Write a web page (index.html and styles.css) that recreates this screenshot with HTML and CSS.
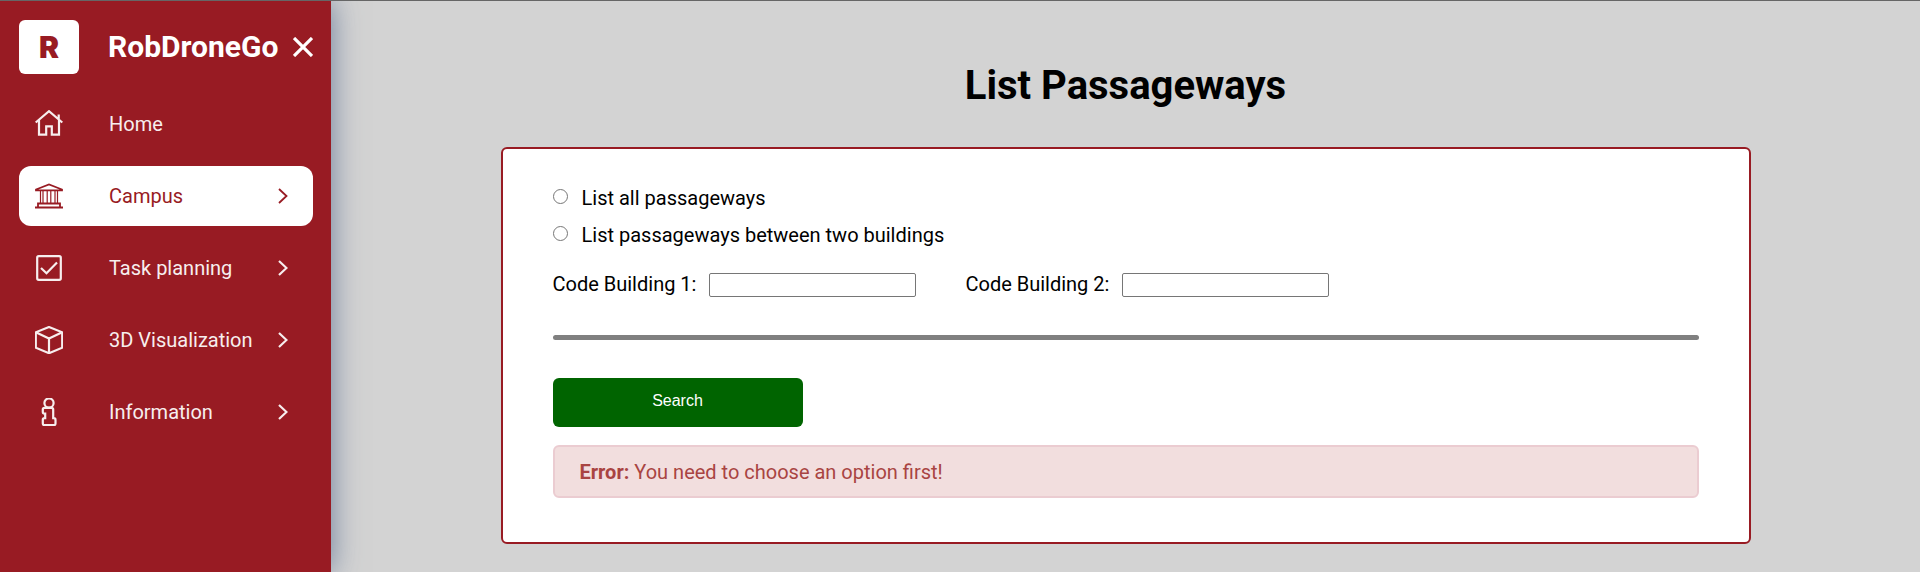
FILE: index.html
```
<!DOCTYPE html>
<html lang="en">
<head>
<meta charset="utf-8">
<title>RobDroneGo</title>
<link rel="stylesheet" href="styles.css">
</head>
<body>
<div class="layout">
  <aside class="sidebar">
    <header class="brand">
      <span class="brand-logo">R</span>
      <span class="brand-name">RobDroneGo</span>
      <button class="close" type="button" aria-label="Close menu">
        <svg width="20" height="20" viewBox="0 0 20 20"><path d="M1 1l18 18M19 1L1 19" stroke-width="3.200"/></svg>
      </button>
    </header>
    <nav class="menu">
      <a class="menu-item" href="#">
        <svg class="icon" viewBox="0 0 28 28"><path d="M.7 12.500L14 1.200l13.300 11.300M4 10.200v14.500h7.200v-8.300h5.600v8.300H24V10.200M23.700 9.200V4.400"/></svg>
        <span class="menu-label">Home</span>
      </a>
      <a class="menu-item active" href="#">
        <svg class="icon" viewBox="0 0 28 28"><path d="M1 7.500L14 2.500l13 5v.8H1zM3 25v-3.500h22V25M0 25.500h28" stroke-width="1.800"/><path d="M5.500 9v12M8 9v12M12.200 9v12M15.800 9v12M20 9v12M22.500 9v12" stroke-width="1.200"/></svg>
        <span class="menu-label">Campus</span>
        <svg class="chevron" viewBox="0 0 10 16"><path d="M1 1l7.500 7L1 15"/></svg>
      </a>
      <a class="menu-item" href="#">
        <svg class="icon" viewBox="0 0 28 28"><rect x="2.200" y="2.200" width="23.600" height="23.600" rx="1.500"/><path d="M6 14l5.500 5.200L22 8.500"/></svg>
        <span class="menu-label">Task planning</span>
        <svg class="chevron" viewBox="0 0 10 16"><path d="M1 1l7.500 7L1 15"/></svg>
      </a>
      <a class="menu-item" href="#">
        <svg class="icon" viewBox="0 0 28 28"><path d="M14 1l13.200 5.300v15.400L14 27.200.8 21.700V6.300zM.8 6.300L14 12.500l13.200-6.200M14 12.500v14.700"/></svg>
        <span class="menu-label">3D Visualization</span>
        <svg class="chevron" viewBox="0 0 10 16"><path d="M1 1l7.500 7L1 15"/></svg>
      </a>
      <a class="menu-item" href="#">
        <svg class="icon" viewBox="0 0 28 28"><circle cx="14" cy="5" r="4.600"/><path d="M9.500 9.800h7q1.700 0 1.700 1.700v8.700h.6q1.700 0 1.700 1.700v3.600q0 1.700-1.700 1.700H9.500q-1.700 0-1.700-1.700v-3.600q0-1.700 1.700-1.700h.7v-4.500h-.7q-1.700 0-1.700-1.700v-2.500q0-1.700 1.700-1.700z"/></svg>
        <span class="menu-label">Information</span>
        <svg class="chevron" viewBox="0 0 10 16"><path d="M1 1l7.500 7L1 15"/></svg>
      </a>
    </nav>
  </aside>

  <main class="content">
    <h1 class="title">List Passageways</h1>
    <form class="card">
      <div class="option">
        <input class="radio" type="radio" name="mode" id="all">
        <label for="all">List all passageways</label>
      </div>
      <div class="option">
        <input class="radio" type="radio" name="mode" id="between">
        <label for="between">List passageways between two buildings</label>
      </div>
      <div class="fields">
        <div class="field">
          <label for="code1">Code Building 1:</label>
          <input class="text" type="text" id="code1">
        </div>
        <div class="field">
          <label for="code2">Code Building 2:</label>
          <input class="text" type="text" id="code2">
        </div>
      </div>
      <hr class="divider">
      <button class="search" type="button">Search</button>
      <p class="error" role="alert"><strong>Error:</strong> You need to choose an option first!</p>
    </form>
  </main>
</div>
</body>
</html>
```
FILE: styles.css
```
*, *::before, *::after {
  box-sizing: border-box;
}

body {
  margin: 0;
  border-top: 1px solid #666;
  background: #d3d3d3;
  color: #000;
  font-family: Roboto, sans-serif;
  font-size: 20px;
  line-height: 24px;
}

.layout {
  display: flex;
  min-height: calc(100vh - 1px);
}

.sidebar {
  flex: none;
  width: 331px;
  padding: 19px 18px 19px 19px;
  background: #981b23;
  color: #fff;
  box-shadow: 0 0 28px 0 rgba(90, 110, 145, 0.85);
}

.brand {
  display: flex;
  align-items: center;
  height: 54px;
  margin-bottom: 20px;
}

.brand-logo {
  display: grid;
  place-items: center;
  width: 60px;
  height: 54px;
  margin-right: 29px;
  border-radius: 6px;
  background: #fff;
  color: #981b23;
  font: 900 30px/54px Inter, sans-serif;
}

.brand-name {
  flex: 1;
  font-size: 30px;
  font-weight: 700;
}

.close {
  display: flex;
  padding: 0;
  border: 0;
  background: none;
  color: inherit;
}

svg {
  flex: none;
  fill: none;
  stroke: currentColor;
  stroke-width: 2.2;
}

.menu {
  display: grid;
  gap: 12px;
}

.menu-item {
  display: flex;
  align-items: center;
  height: 60px;
  padding: 0 25px 0 16px;
  border-radius: 12px;
  color: #f7eeee;
  text-decoration: none;
}

.menu-item.active {
  background: #fff;
  color: #981b23;
}

.icon {
  width: 28px;
  height: 28px;
  margin-right: 46px;
}

.menu-label {
  flex: 1;
}

.chevron {
  width: 10px;
  height: 16px;
}

.active .chevron {
  stroke-width: 1.8;
}

.content {
  flex: 1;
  padding: 61px 40px 28px;
}

.title {
  margin: 0 0 37px;
  font-size: 40px;
  font-weight: 700;
  line-height: 48px;
  text-align: center;
}

.card {
  max-width: 1250px;
  margin: 0 auto;
  padding: 37px 50px 44px;
  border: 2px solid #981b23;
  border-radius: 6px;
  background: #fff;
}

.option {
  display: flex;
  align-items: flex-start;
  gap: 14px;
  margin-bottom: 13px;
}

.radio {
  width: 15px;
  height: 15px;
  margin: 3px 0 0;
}

.fields {
  display: flex;
  flex-wrap: wrap;
  gap: 12px 49px;
  margin-top: 25px;
}

.field {
  display: flex;
  align-items: flex-end;
  gap: 13px;
}

.field label {
  padding-bottom: 1px;
}

.text {
  width: 207px;
  height: 24px;
  border: 1px solid #767676;
  border-radius: 2px;
  background: #fff;
}

.divider {
  height: 5px;
  margin: 38px 0;
  border: 0;
  border-radius: 3px;
  background: gray;
}

.search {
  display: block;
  width: 250px;
  height: 49px;
  padding-bottom: 4px;
  border: 0;
  border-radius: 6px;
  background: #006400;
  color: #fff;
  font: 16px/20px "Liberation Sans", Arial, sans-serif;
}

.error {
  margin: 18px 0 0;
  padding: 13px 25px 12px;
  border: 2px solid #ebccd1;
  border-radius: 6px;
  background: #f2dede;
  color: #a94442;
}
```
